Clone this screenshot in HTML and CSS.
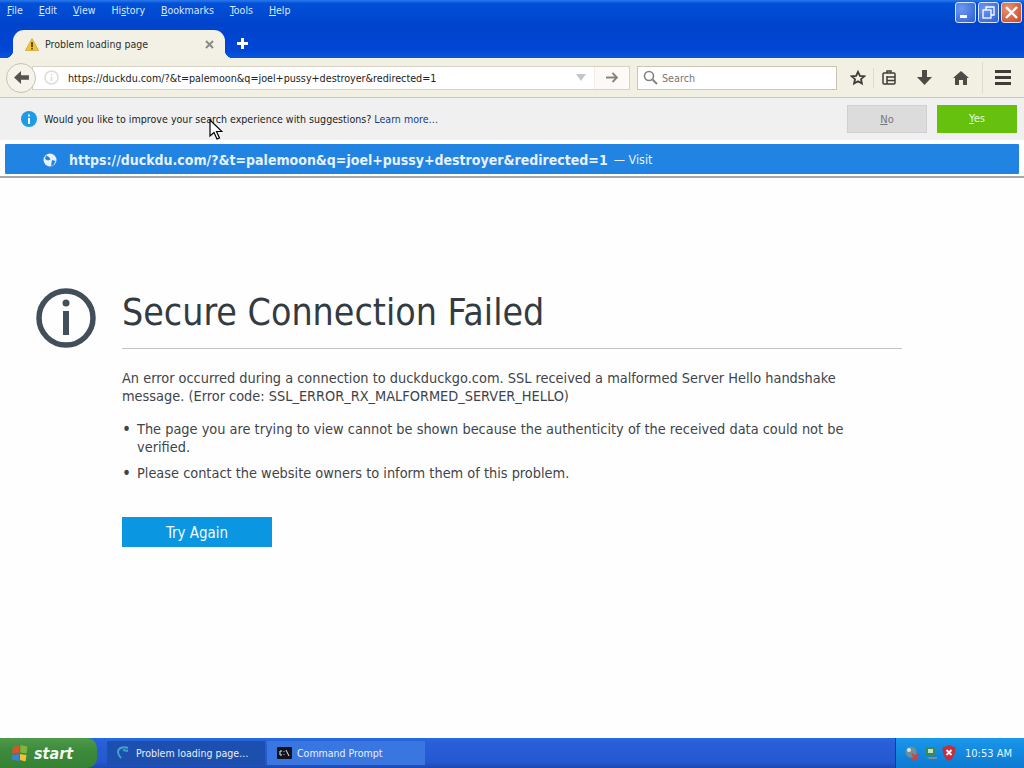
FILE: index.html
```html
<!DOCTYPE html>
<html lang="en">
<head>
    <meta charset="UTF-8">
    <title>Problem loading page</title>
    <link rel="stylesheet" href="styles.css">
</head>
<body>

    <div class="titlebar">
        <div class="menu-row">
            <nav class="menu">
                <span><u>F</u>ile</span>
                <span><u>E</u>dit</span>
                <span><u>V</u>iew</span>
                <span>Hi<u>s</u>tory</span>
                <span><u>B</u>ookmarks</span>
                <span><u>T</u>ools</span>
                <span><u>H</u>elp</span>
            </nav>
            <div class="win-buttons">
                <div class="win-btn"><svg width="19" height="19" viewBox="0 0 19 19"><rect x="4" y="12" width="7" height="3" fill="#fff"/></svg></div>
                <div class="win-btn"><svg width="19" height="19" viewBox="0 0 19 19" fill="none" stroke="#fff" stroke-width="1.3"><rect x="4" y="7" width="8" height="8"/><path d="M7 7V4h8v8h-3"/></svg></div>
                <div class="win-btn win-close"><svg width="19" height="19" viewBox="0 0 19 19" stroke="#fff" stroke-width="2.4"><path d="M4 4l11 11M15 4L4 15"/></svg></div>
            </div>
        </div>
        <div class="tab-row">
            <div class="tab">
                <svg width="14" height="13" viewBox="0 0 14 13"><path d="M7 .5L13.7 12.5H.3z" fill="#f2c230" stroke="#c99a1c" stroke-width=".6"/><rect x="6.2" y="4" width="1.6" height="5" fill="#4a3a10"/><rect x="6.2" y="9.8" width="1.6" height="1.6" fill="#4a3a10"/></svg>
                <span class="tab-title">Problem loading page</span>
                <svg class="tab-close" width="9" height="9" viewBox="0 0 9 9" stroke="#8a8a86" stroke-width="2"><path d="M1 1l7 7M8 1L1 8"/></svg>
            </div>
            <svg class="new-tab" width="11" height="11" viewBox="0 0 11 11" fill="#fff"><path d="M4 0h3v4h4v3H7v4H4V7H0V4h4z"/></svg>
        </div>
    </div>

    <div class="toolbar">
        <div class="back-btn">
            <svg width="15" height="13" viewBox="0 0 16 14" fill="#55534d"><path d="M7.5 0L0 7l7.5 7V9.5H16v-5H7.5z"/></svg>
        </div>
        <div class="urlbar">
            <svg width="15" height="15" viewBox="0 0 15 15" class="site-icon"><circle cx="7.5" cy="7.5" r="6.5" fill="none" stroke="#dcdcd8" stroke-width="1.5"/><rect x="6.7" y="6.5" width="1.6" height="4.5" fill="#dcdcd8"/><rect x="6.7" y="3.8" width="1.6" height="1.6" fill="#dcdcd8"/></svg>
            <span class="url-text">https://duckdu.com/?&amp;t=palemoon&amp;q=joel+pussy+destroyer&amp;redirected=1</span>
            <svg width="10" height="7" viewBox="0 0 10 7" fill="#c3c7c9"><path d="M0 0h10L5 7z"/></svg>
            <div class="go-btn">
                <svg width="12" height="11" viewBox="0 0 12 11" fill="none" stroke="#85837c" stroke-width="1.8"><path d="M0 5.5h10.5M6.5 1l4.5 4.5L6.5 10"/></svg>
            </div>
        </div>
        <div class="searchbar">
            <svg width="15" height="15" viewBox="0 0 15 15" fill="none" stroke="#85837c" stroke-width="1.6"><circle cx="6" cy="6" r="4.5"/><path d="M9.5 9.5L14 14" stroke-width="2"/></svg>
            <span class="search-text">Search</span>
        </div>
        <div class="tools">
            <svg width="16" height="16" viewBox="0 0 16 16" fill="none" stroke="#3f3d37" stroke-width="1.8"><path d="M8 1.8l1.9 4 4.3.5-3.2 2.9.9 4.3L8 11.3l-3.9 2.2.9-4.3-3.2-2.9 4.3-.5z"/></svg>
            <span class="tool-sep"></span>
            <svg width="14" height="15" viewBox="0 0 14 15" fill="none" stroke="#3f3d37" stroke-width="1.5"><rect x="1" y="3" width="12" height="11" rx="1"/><path d="M5 3V1h4v2M5 6v8M5 7h8M5 10.500h8"/></svg>
            <svg class="tool-gap" width="15" height="15" viewBox="0 0 15 15" fill="#4d4b45"><path d="M5 0h5v7h5l-7.500 8L0 7h5z"/></svg>
            <svg class="tool-gap" width="16" height="14" viewBox="0 0 16 14" fill="#4d4b45"><path d="M8 0l8 7h-2v7h-4V9H6v5H2V7H0z"/></svg>
            <span class="tool-sep tool-sep-wide"></span>
            <div class="hamburger"><i></i><i></i><i></i></div>
        </div>
    </div>

    <div class="infobar">
        <svg width="16" height="16" viewBox="0 0 16 16"><circle cx="8" cy="8" r="8" fill="#1d9be6"/><rect x="7" y="7" width="2" height="6" fill="#fff"/><rect x="7" y="3.500" width="2" height="2" fill="#fff"/></svg>
        <span class="info-text">Would you like to improve your search experience with suggestions?</span>
        <a class="info-link">Learn more…</a>
        <div class="info-actions">
            <div class="info-btn info-no"><u>N</u>o</div>
            <div class="info-btn info-yes"><u>Y</u>es</div>
        </div>
    </div>

    <div class="results">
        <div class="result-row">
            <svg width="14" height="14" viewBox="0 0 14 14"><circle cx="7" cy="7" r="6.500" fill="#e8f2fb"/><path d="M3 2.500l3 1.500 1.500 2.500-2.500 1L2 6zM9 7l3.500 1-2 4-2.500 1z" fill="#2183e2"/></svg>
            <span class="result-url">https://duckdu.com/?&amp;t=palemoon&amp;q=joel+pussy+destroyer&amp;redirected=1</span>
            <span class="result-visit">— Visit</span>
        </div>
    </div>

    <main class="page">
        <svg class="error-icon" width="60" height="60" viewBox="0 0 60 60"><circle cx="30" cy="30" r="27" fill="none" stroke="#424e5a" stroke-width="5.500"/><circle cx="30" cy="15" r="3.500" fill="#424e5a"/><rect x="27" y="23" width="6" height="24" fill="#424e5a"/></svg>
        <div class="error-body">
            <h1>Secure Connection Failed</h1>
            <p class="error-desc">An error occurred during a connection to duckduckgo.com. SSL received a malformed Server Hello handshake message. (Error code: SSL_ERROR_RX_MALFORMED_SERVER_HELLO)</p>
            <ul>
                <li>The page you are trying to view cannot be shown because the authenticity of the received data could not be verified.</li>
                <li>Please contact the website owners to inform them of this problem.</li>
            </ul>
            <div class="try-again">Try Again</div>
        </div>
    </main>

    <div class="taskbar">
        <div class="start">
            <svg width="18" height="18" viewBox="0 0 18 18"><path d="M2 3l6-1.500v7L1 9.500z" fill="#d9532c"/><path d="M9.500 1l7 1.500-1 7-6.500-1z" fill="#7fb53c"/><path d="M1 11l7-1v7l-7-1.500z" fill="#3f7fd6"/><path d="M9 10l6.500 1-1 6.500L9 16z" fill="#f2c230"/></svg>
            <span>start</span>
        </div>
        <div class="task task-active">
            <svg width="16" height="16" viewBox="0 0 16 16" fill="none" stroke="#3fa4c8" stroke-width="2"><path d="M13 3C8 1 3 3 3 7c0 2 1 4 3 6"/><path d="M8 5l5 1"/></svg>
            <span>Problem loading page…</span>
        </div>
        <div class="task">
            <svg width="15" height="12" viewBox="0 0 15 12"><rect width="15" height="12" rx="1" fill="#10131c"/><path d="M5 4H3v4h2M7 4v.8M7 7v.8M9 3l3 6" fill="none" stroke="#e8e8e8"/></svg>
            <span>Command Prompt</span>
        </div>
        <div class="tray">
            <svg width="16" height="16" viewBox="0 0 16 16"><circle cx="7" cy="7" r="5.500" fill="#6f8f9c"/><circle cx="5" cy="5" r="2" fill="#d7e5ea"/><path d="M8 9l6 6M14 9l-6 6" stroke="#e0402c" stroke-width="2"/></svg>
            <svg width="16" height="16" viewBox="0 0 16 16"><rect x="3" y="2" width="9" height="9" fill="#3c8a52"/><rect x="5" y="4" width="5" height="4" fill="#bfe3c5"/><path d="M4 12h10v2H6z" fill="#7d8d95"/></svg>
            <svg width="14" height="16" viewBox="0 0 14 16"><path d="M7 0l6.500 2.500c0 6-2 11-6.500 13.500C2.500 13.500.5 8.500.5 2.500z" fill="#c62f3a"/><path d="M4.500 5l5 5M9.500 5l-5 5" stroke="#fff" stroke-width="1.800"/></svg>
            <span class="clock">10:53 AM</span>
        </div>
    </div>

    <svg class="cursor" width="14" height="22" viewBox="0 0 14 22"><path d="M1 1v16l4-3.500 3 6.500 2.500-1-3-6.500h5.500z" fill="#fff" stroke="#000" stroke-width="1.200"/></svg>

</body>
</html>
```

FILE: styles.css
```css
html, body {
    margin: 0;
    padding: 0;
    height: 768px;
    overflow: hidden;
}

body {
    font-family: "DejaVu Sans Condensed", "Noto Sans", sans-serif;
    font-stretch: condensed;
    background-color: #ffffff;
    display: flex;
    flex-direction: column;
    position: relative;
    width: 1024px;
}

/* Window title area */
.titlebar {
    height: 58px;
    flex: none;
    background: linear-gradient(to bottom, #2a78ec 0%, #0250d8 6%, #0044cc 40%, #0046d4 85%, #0a55dc 100%);
    display: flex;
    flex-direction: column;
}

.menu-row {
    height: 30px;
    display: flex;
    justify-content: space-between;
    align-items: flex-start;
}

.menu {
    display: flex;
    gap: 16px;
    padding: 4px 0 0 7px;
    font-size: 10.5px;
    color: #dbe7fb;
}

.win-buttons {
    display: flex;
    gap: 2px;
    padding: 2px 2px 0 0;
}

.win-btn {
    width: 21px;
    height: 21px;
    box-sizing: border-box;
    border: 1px solid #d8e4f8;
    border-radius: 3px;
    background: radial-gradient(circle at 30% 30%, #6d97ee, #2a5fd8);
}

.win-close {
    background: radial-gradient(circle at 30% 30%, #ea9170, #cc4420);
}

.tab-row {
    height: 28px;
    display: flex;
    align-items: flex-end;
    padding-left: 13px;
}

.tab {
    width: 212px;
    height: 28px;
    box-sizing: border-box;
    padding: 0 11px 0 12px;
    display: flex;
    align-items: center;
    position: relative;
    background-color: #f3f1e6;
    border-radius: 11px 11px 0 0;
    font-size: 10.5px;
    color: #2f2f2c;
}

/* flared bottom corners of the tab */
.tab::before,
.tab::after {
    content: "";
    position: absolute;
    bottom: 0;
    width: 8px;
    height: 8px;
}

.tab::before {
    left: -8px;
    background: radial-gradient(circle at 0 0, transparent 8px, #f3f1e6 8.5px);
}

.tab::after {
    right: -8px;
    background: radial-gradient(circle at 100% 0, transparent 8px, #f3f1e6 8.5px);
}

.tab-title {
    margin-left: 6px;
    flex: 1;
}

.new-tab {
    margin: 0 0 9px 12px;
}

/* Nav toolbar */
.toolbar {
    height: 40px;
    flex: none;
    box-sizing: border-box;
    background-color: #f2f0e3;
    border-bottom: 1px solid #c9c6b4;
    display: flex;
    align-items: center;
    padding: 0 11px 0 6px;
}

.back-btn {
    width: 28px;
    height: 28px;
    border: 1px solid #c5c2b4;
    border-radius: 50%;
    background-color: #f5f3ea;
    display: flex;
    align-items: center;
    justify-content: center;
    flex: none;
    z-index: 1;
}

.urlbar {
    width: 598px;
    height: 24px;
    margin-left: -4px;
    box-sizing: border-box;
    background-color: #ffffff;
    border: 1px solid #d6d3c4;
    display: flex;
    align-items: center;
    padding-left: 11px;
    font-size: 10.7px;
    color: #222;
    flex: none;
}

.url-text {
    margin-left: 9px;
    padding-top: 1px;
    flex: 1;
}

.go-btn {
    width: 34px;
    height: 22px;
    margin-left: 8px;
    background-color: #fbfaf6;
    border-left: 1px solid #f0eee6;
    display: flex;
    align-items: center;
    justify-content: center;
}

.searchbar {
    width: 200px;
    height: 24px;
    margin-left: 7px;
    box-sizing: border-box;
    background-color: #ffffff;
    border: 1px solid #c9c6b4;
    display: flex;
    align-items: center;
    gap: 4px;
    padding-left: 5px;
    font-size: 10.7px;
    color: #77766f;
    flex: none;
}

.search-text {
    padding-top: 1px;
}

.tools {
    margin-left: 13px;
    display: flex;
    align-items: center;
}

.tool-sep {
    width: 1px;
    height: 20px;
    background-color: #dedbca;
    margin: 0 8px 0 7px;
}

.tool-sep-wide {
    margin: 0 12px 0 13px;
    height: 32px;
}

.tool-gap {
    margin-left: 21px;
}

.hamburger {
    width: 16px;
    display: flex;
    flex-direction: column;
    gap: 3px;
}

.hamburger i {
    display: block;
    height: 3px;
    background-color: #3f3d37;
}

/* Notification asking about suggestions */
.infobar {
    height: 42px;
    flex: none;
    box-sizing: border-box;
    background-color: #f0f0f0;
    display: flex;
    align-items: center;
    padding: 0 7px 0 21px;
    font-size: 10.6px;
    color: #1d1d1d;
}

.info-text {
    margin-left: 7px;
}

.info-link {
    margin-left: 3px;
    color: #1a3a8c;
}

.info-actions {
    margin-left: auto;
    display: flex;
    gap: 10px;
}

.info-btn {
    width: 80px;
    height: 28px;
    line-height: 28px;
    text-align: center;
    font-size: 11px;
}

.info-no {
    background-color: #dcdcdc;
    border: 1px solid #d0d0d0;
    box-sizing: border-box;
    color: #777;
}

.info-yes {
    background-color: #66c10e;
    color: #e8f8d8;
}

/* Autocomplete popup */
.results {
    height: 38px;
    flex: none;
    box-sizing: border-box;
    background-color: #ffffff;
    border-bottom: 2px solid #a8a8a8;
    padding: 4px 5px 0;
}

.result-row {
    height: 30px;
    box-sizing: border-box;
    background-color: #2183e2;
    border-radius: 1px;
    display: flex;
    align-items: center;
    padding: 1px 0 0 38px;
    color: #e6f1fc;
}

.result-url {
    margin-left: 12px;
    font-size: 14px;
    font-weight: 700;
}

.result-visit {
    margin-left: 6px;
    font-size: 12.5px;
}

/* Error page */
.page {
    flex: 1;
    display: flex;
    align-items: flex-start;
    background-color: #fefefe;
    padding: 110px 0 0 36px;
}

.error-icon {
    flex: none;
}

.error-body {
    width: 780px;
    margin-left: 26px;
    color: #3f444a;
    font-size: 14.4px;
}

h1 {
    margin: 0 0 20px;
    padding-bottom: 11px;
    border-bottom: 1px solid #c4c4c4;
    font-size: 37.2px;
    line-height: 49px;
    font-weight: 400;
    color: #333b42;
}

.error-desc {
    margin: 0 0 15px;
    line-height: 18px;
}

ul {
    margin: 0 0 35px;
    padding: 0 40px 0 0;
    list-style: none;
    line-height: 18px;
}

li {
    display: flex;
    margin-bottom: 8px;
}

li::before {
    content: "•";
    flex: none;
    width: 15px;
    font-size: 17px;
}

.try-again {
    width: 150px;
    height: 30px;
    box-sizing: border-box;
    padding-top: 1px;
    line-height: 30px;
    text-align: center;
    background-color: #0a96e0;
    color: #f0f8ff;
    font-size: 15px;
}

/* XP taskbar */
.taskbar {
    height: 30px;
    flex: none;
    display: flex;
    align-items: center;
    background: linear-gradient(to bottom, #1f6fe6 0%, #2a5fd8 12%, #2458d0 80%, #1c48b0 100%);
}

.start {
    width: 97px;
    height: 30px;
    box-sizing: border-box;
    background: linear-gradient(to bottom, #4f9a4a, #3d8b3c 40%, #358234);
    border-radius: 0 10px 10px 0;
    display: flex;
    align-items: center;
    gap: 5px;
    padding-left: 11px;
    color: #f2f6ee;
    font-size: 16px;
    font-weight: 700;
    font-style: italic;
}

.task {
    width: 158px;
    height: 24px;
    margin-left: 2px;
    box-sizing: border-box;
    display: flex;
    align-items: center;
    gap: 5px;
    padding-left: 10px;
    font-size: 10.5px;
    color: #e8eefb;
    background-color: #3a76e0;
}

.task-active {
    margin-left: 10px;
    padding-left: 8px;
    background-color: #1d4fae;
}

.tray {
    margin-left: auto;
    width: 129px;
    height: 30px;
    box-sizing: border-box;
    display: flex;
    align-items: center;
    gap: 3px;
    padding-left: 8px;
    background: linear-gradient(to bottom, #1a97ea, #1288de 50%, #0f7ad0);
    border-left: 1px solid #0f3d90;
}

.clock {
    margin-left: 6px;
    font-size: 11px;
    color: #e8f4fd;
}

/* Mouse pointer over the page */
.cursor {
    position: absolute;
    left: 209px;
    top: 119px;
}
```
